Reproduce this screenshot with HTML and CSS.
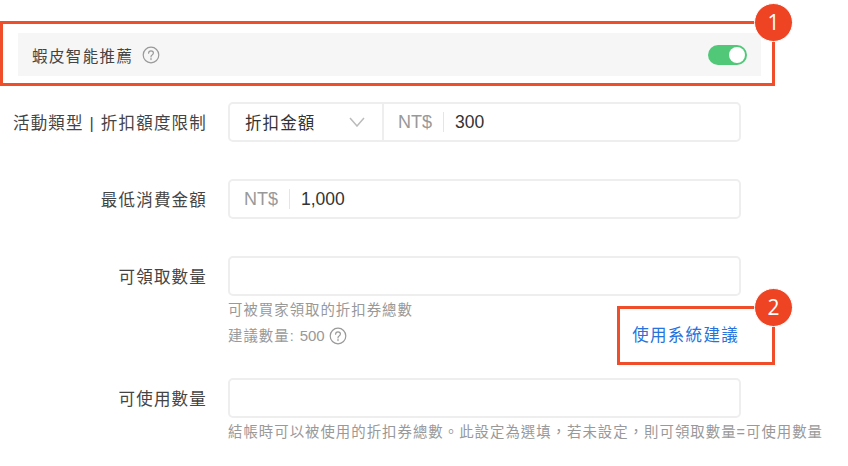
FILE: index.html
```html
<!DOCTYPE html>
<html lang="zh-Hant">
<head>
    <meta charset="UTF-8">
    <meta name="viewport" content="width=device-width, initial-scale=1.0">
    <title>折扣券設定</title>
    <link rel="stylesheet" href="styles.css">
</head>
<body>
    <main class="page">
        <div class="smart-bar">
            <div class="smart-title">
                <span>蝦皮智能推薦</span>
                <svg class="help-icon" viewBox="0 0 18 18" width="18" height="18">
                    <circle cx="9" cy="9" r="7.8"/>
                    <path d="M6.6 7.2c0-1.4 1-2.3 2.4-2.3s2.4.9 2.4 2.2c0 1-.6 1.5-1.3 2-.7.4-1.1.8-1.1 1.6v.3"/>
                    <path d="M9 12.6v1"/>
                </svg>
            </div>
            <div class="toggle"><span class="toggle-knob"></span></div>
        </div>

        <div class="form-row first-row">
            <label class="form-label">活動類型 | 折扣額度限制</label>
            <div class="form-field">
                <div class="input-box">
                    <div class="select-part">
                        <span>折扣金額</span>
                        <svg class="chevron" viewBox="0 0 16 10" width="16" height="10">
                            <path d="M1 1l7 8 7-8"/>
                        </svg>
                    </div>
                    <span class="prefix">NT$</span>
                    <span class="value">300</span>
                </div>
            </div>
        </div>

        <div class="form-row">
            <label class="form-label">最低消費金額</label>
            <div class="form-field">
                <div class="input-box">
                    <span class="prefix">NT$</span>
                    <span class="value">1,000</span>
                </div>
            </div>
        </div>

        <div class="form-row">
            <label class="form-label">可領取數量</label>
            <div class="form-field">
                <div class="input-box"></div>
                <div class="help-row">
                    <div class="help-text">
                        <div>可被買家領取的折扣券總數</div>
                        <div class="suggest">
                            <span>建議數量: <span class="suggest-num">500</span></span>
                            <svg class="help-icon" viewBox="0 0 18 18" width="18" height="18">
                                <circle cx="9" cy="9" r="7.8"/>
                                <path d="M6.6 7.2c0-1.4 1-2.3 2.4-2.3s2.4.9 2.4 2.2c0 1-.6 1.5-1.3 2-.7.4-1.1.8-1.1 1.6v.3"/>
                                <path d="M9 12.6v1"/>
                            </svg>
                        </div>
                    </div>
                    <a href="#" class="suggest-link">使用系統建議</a>
                </div>
            </div>
        </div>

        <div class="form-row last-row">
            <label class="form-label">可使用數量</label>
            <div class="form-field">
                <div class="input-box"></div>
                <div class="help-text nowrap">結帳時可以被使用的折扣券總數。此設定為選填，若未設定，則可領取數量=可使用數量</div>
            </div>
        </div>

        <!-- Callouts drawn over the form -->
        <div class="callout callout-one"><span class="badge">1</span></div>
        <div class="callout callout-two"><span class="badge">2</span></div>
    </main>
</body>
</html>
```

FILE: styles.css
```css
body {
    margin: 0;
    padding: 0;
    background-color: white;
    color: #333;
    font-family: "Liberation Sans", "Noto Sans CJK TC", sans-serif;
}

.page {
    position: relative;
    width: 848px;
    height: 466px;
    padding-top: 33px;
    box-sizing: border-box;
    overflow: hidden;
}

.smart-bar {
    display: flex;
    align-items: center;
    justify-content: space-between;
    height: 43px;
    margin-left: 18px;
    width: 743px;
    padding: 0 14px;
    box-sizing: border-box;
    background-color: #f6f6f6;
}

.smart-title {
    display: flex;
    align-items: center;
    gap: 9px;
    font-size: 15.5px;
    letter-spacing: 1.4px;
    color: #444;
}

.help-icon {
    fill: none;
    stroke: #999;
    stroke-width: 1.2;
    stroke-linecap: round;
}

.toggle {
    width: 39px;
    height: 20px;
    border-radius: 10px;
    background-color: #51c878;
    display: flex;
    align-items: center;
    justify-content: flex-end;
    padding-right: 2px;
    box-sizing: border-box;
}

.toggle-knob {
    width: 16px;
    height: 16px;
    border-radius: 50%;
    background-color: white;
}

.form-row {
    display: flex;
    gap: 21px;
    margin-top: 37px;
}

.first-row {
    margin-top: 26px;
}

.last-row {
    margin-top: 30px;
}

.form-label {
    width: 207px;
    height: 40px;
    flex-shrink: 0;
    line-height: 42px;
    text-align: right;
    white-space: nowrap;
    font-size: 16.5px;
    letter-spacing: 1.2px;
    color: #444;
}

.form-field {
    width: 513px;
}

.input-box {
    display: flex;
    align-items: center;
    height: 40px;
    box-sizing: border-box;
    border: 2px solid #eee;
    border-radius: 5px;
    background-color: white;
    padding-left: 14px;
}

.select-part {
    display: flex;
    align-items: center;
    justify-content: space-between;
    width: 154px;
    height: 100%;
    margin-left: -14px;
    margin-right: 14px;
    padding: 0 17px 0 15px;
    box-sizing: border-box;
    border-right: 2px solid #eee;
    font-size: 16.5px;
    letter-spacing: 1.1px;
}

.chevron {
    fill: none;
    stroke: #bbb;
    stroke-width: 1.5;
}

.prefix {
    padding-right: 10.5px;
    border-right: 1px solid #e5e5e5;
    font-size: 18px;
    line-height: 20px;
    color: #999;
}

.value {
    padding-left: 11.5px;
    font-size: 17.5px;
}

.help-row {
    display: flex;
    justify-content: space-between;
    align-items: flex-end;
    height: 52px;
}

.help-text {
    margin-top: 2px;
    font-size: 14.4px;
    letter-spacing: 1.02px;
    line-height: 25px;
    color: #999;
}

.nowrap {
    white-space: nowrap;
}

.suggest {
    display: flex;
    align-items: center;
    gap: 4px;
    height: 25px;
}

.suggest-num {
    font-size: 15px;
    letter-spacing: 0;
}

.suggest-link {
    margin-right: 2px;
    line-height: 25px;
    font-size: 16.5px;
    letter-spacing: 1.3px;
    color: #2673dd;
    text-decoration: none;
}

.callout {
    position: absolute;
    box-sizing: border-box;
    border: 3px solid #f04e2b;
}

.callout-one {
    left: 0;
    top: 21px;
    width: 775px;
    height: 65px;
}

.callout-two {
    left: 617px;
    top: 306px;
    width: 158px;
    height: 59px;
}

.badge {
    position: absolute;
    right: -21px;
    top: -21px;
    width: 37px;
    height: 37px;
    border: 1px solid white;
    border-radius: 50%;
    background-color: #ef4423;
    color: white;
    font-family: "Open Sans", sans-serif;
    font-size: 21px;
    line-height: 37px;
    text-align: center;
}
```
